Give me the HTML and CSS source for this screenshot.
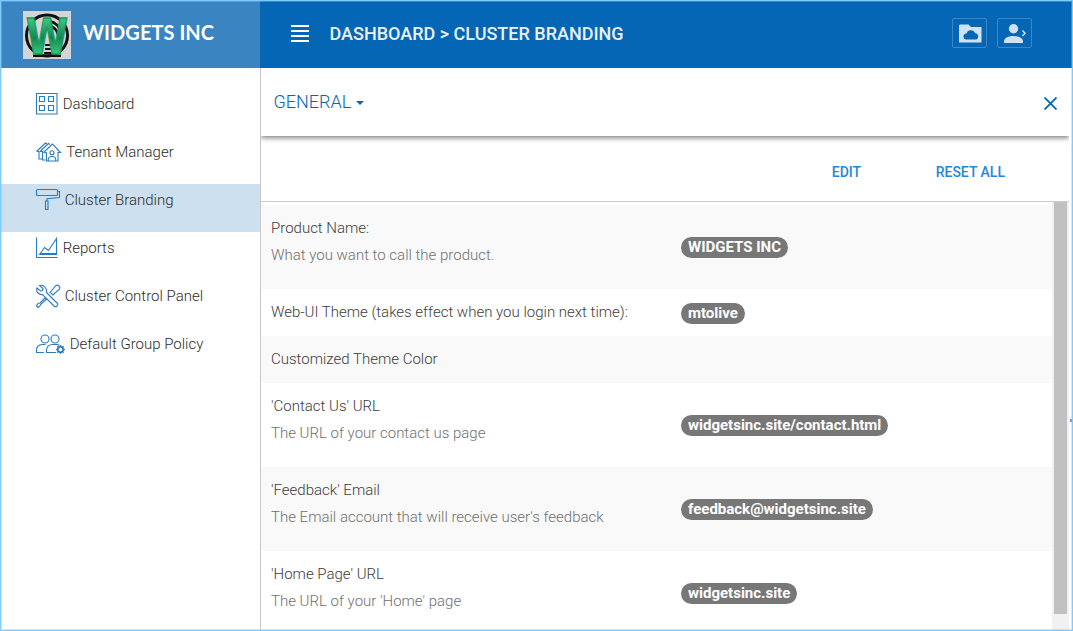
FILE: index.html
```html
<!DOCTYPE html>
<html lang="en">
<head>
<meta charset="utf-8">
<title>Cluster Branding</title>
<link rel="stylesheet" href="styles.css">
</head>
<body>
<div class="app">
  <header class="topbar">
    <div class="brand">
      <svg class="logo" width="48" height="48" viewBox="0 0 48 48">
        <defs>
          <linearGradient id="green" x1="0" y1="0" x2="0" y2="1">
            <stop offset=".2" stop-color="#35c47c"/><stop offset=".5" stop-color="#168550"/><stop offset=".8" stop-color="#35cc80"/>
          </linearGradient>
        </defs>
        <rect width="48" height="48" fill="#d3d3d8"/>
        <g fill="none" stroke="#101010">
          <circle cx="24" cy="24.500" r="20.500" stroke-width="3"/>
          <path d="M26 10q10 2 12 12M27 15q7 2 8 9" stroke-width="2.500"/>
          <path d="M22 34h6M22 38h6M21 42h8" stroke-width="2"/>
          <path d="M10 44.800h28" stroke-width="2.500"/>
        </g>
        <text class="logo-letter" x="24" y="43" text-anchor="middle" textLength="42" lengthAdjust="spacingAndGlyphs">W</text>
      </svg>
      <span class="brand-name">WIDGETS INC</span>
    </div>
    <div class="topbar-main">
      <svg class="burger" width="18" height="17" viewBox="0 0 18 17"><path d="M0 1h18M0 6h18M0 11h18M0 16h18" stroke="#fff" stroke-width="2"/></svg>
      <h1 class="crumbs">DASHBOARD &gt; CLUSTER BRANDING</h1>
      <div class="actions">
        <span class="action">
          <svg width="33" height="28" viewBox="0 0 33 28"><path fill="#d0e2f1" d="M7 5.500h8.500l2.500 2.500h10.500v15.500H6V7q0-1.500 1-1.500z"/><path fill="#0466b4" d="M13.500 20.500a3 3 0 0 1 0-6 4.600 4.600 0 0 1 8.700-.3 3.200 3.200 0 0 1 .5 6.300z"/></svg>
        </span>
        <span class="action">
          <svg width="33" height="28" viewBox="0 0 33 28"><g fill="#d0e2f1"><circle cx="15.500" cy="9.700" r="4.700"/><path d="M6 24v-1.500c0-4 5-5.500 9.500-5.500s9.500 1.500 9.500 5.500V24z"/></g><path d="M24.500 11.500l2.500 2.700-2.500 2.800" fill="none" stroke="#d0e2f1" stroke-width="1.500"/></svg>
        </span>
      </div>
    </div>
  </header>
  <div class="body">
    <nav class="sidebar">
      <a class="nav-item">
        <svg width="22" height="22" viewBox="0 0 22 22"><path d="M.5.500h20.500v20.500H.5zM3.500 3.500h5v5h-5zM12.500 3.500h5v5h-5zM3.500 12.500h5v5h-5zM12.500 12.500h5v5h-5z"/></svg>
        <span class="nav-label">Dashboard</span>
      </a>
      <a class="nav-item">
        <svg width="25" height="20" viewBox="0 0 25 20"><path d="M7.500 10.500L16.500 2l8 8.500h-2.500V19H10.500V10.500M7.500 10.500h3M.5 9.500L9.500 1l1.500 1M.5 9.500h2.500v7.500h3M4 9.500L12.500 1.500l1.500 1M4 9.500h2.500V18h3"/><circle cx="16" cy="10.700" r="2"/><path d="M12.300 19v-1.500q0-3 3.700-3t3.700 3V19"/></svg>
        <span class="nav-label tenant">Tenant Manager</span>
      </a>
      <a class="nav-item selected">
        <svg width="24" height="22" viewBox="0 0 24 22"><path d="M1.500.500h19q1 0 1 1v4q0 1-1 1h-19q-1 0-1-1v-4q0-1 1-1zM21.500 2.500h2v6l-12.500 1.200V12M9.500 12h2.500v8.500H9.500z"/></svg>
        <span class="nav-label">Cluster Branding</span>
      </a>
      <a class="nav-item">
        <svg width="22" height="22" viewBox="0 0 22 22"><path d="M.5.500v20h21M3.500 17.500l5-7 4 3L20.500 1.500v16zM4 16.500h16"/></svg>
        <span class="nav-label">Reports</span>
      </a>
      <a class="nav-item">
        <svg width="24" height="24" viewBox="0 0 24 24"><path d="M3.500 1.500l3.500 3-.5 2-2 .5-3.500-3q-1 3 1 5t4.500 1.500L18 22q1.500 1.500 3 0t.5-2.500L10.500 8.500Q11 5.500 9 3T3.500 1.500zM14 8.500l6-7q1.500-1 3 .5t.5 3l-6.500 6zM9 14l-5 5-2 .5-1.500 2.500L2 23.500l2-1.500.5-1.500L10.500 15z"/></svg>
        <span class="nav-label">Cluster Control Panel</span>
      </a>
      <a class="nav-item">
        <svg width="29" height="20" viewBox="0 0 29 20"><circle cx="9" cy="5" r="4"/><circle cx="19" cy="5" r="4"/><path d="M8 18.500H.5V16q0-5 6-5.500h3M20 18.500H10.500V16q.5-5.500 6-5.500h4q2 0 3 1"/><circle class="cog" cx="24.500" cy="15.500" r="2.700"/><path class="cog" d="M24.500 12v-.8M24.500 19v.8M21 15.500h-.8M28 15.500h.8M22 13l-.6-.6M27 13l.6-.6M22 18l-.6.600M27 18l.6.600"/></svg>
        <span class="nav-label">Default Group Policy</span>
      </a>
    </nav>
    <main class="content">
      <div class="section-bar">
        <span class="section-name">GENERAL</span>
        <span class="caret"></span>
        <svg class="close" width="13" height="13" viewBox="0 0 13 13"><path d="M.5.500l12 12M12.500.500l-12 12" stroke="#0466b4" stroke-width="1.800"/></svg>
      </div>
      <div class="toolbar">
        <span class="button">EDIT</span>
        <span class="button">RESET ALL</span>
      </div>
      <div class="scroll-area">
        <div class="rows">
          <div class="row shaded tall"><div class="desc"><p class="name">Product Name:</p><p class="hint">What you want to call the product.</p></div><span class="badge">WIDGETS INC</span></div>
          <div class="row"><div class="desc"><p class="name">Web-UI Theme (takes effect when you login next time):</p></div><span class="badge low">mtolive</span></div>
          <div class="row shaded"><div class="desc"><p class="name">Customized Theme Color</p></div></div>
          <div class="row tall"><div class="desc"><p class="name">'Contact Us' URL</p><p class="hint">The URL of your contact us page</p></div><span class="badge">widgetsinc.site/contact.html</span></div>
          <div class="row shaded tall"><div class="desc"><p class="name">'Feedback' Email</p><p class="hint">The Email account that will receive user's feedback</p></div><span class="badge">feedback@widgetsinc.site</span></div>
          <div class="row tall"><div class="desc"><p class="name">'Home Page' URL</p><p class="hint">The URL of your 'Home' page</p></div><span class="badge">widgetsinc.site</span></div>
        </div>
        <div class="scrollbar"><div class="thumb"></div></div>
      </div>
    </main>
  </div>
  <span class="speck"></span>
</div>
</body>
</html>
```
FILE: styles.css
```css
* { box-sizing: border-box; }
body { margin: 0; font-family: Roboto, "Liberation Sans", sans-serif; font-weight: 300; color: #333; background: #fff; }
.app { position: relative; display: flex; flex-direction: column; width: 1073px; height: 631px; overflow: hidden; }
.app::after { content: ""; position: absolute; inset: 0; border: 1px solid #7fcbff; box-shadow: inset 0 0 0 1px rgba(127, 203, 255, .4); }
.topbar { display: flex; flex: none; height: 68px; background: #0466b4; }
.brand { display: flex; align-items: flex-start; width: 260px; padding: 11px 0 0 23px; background: #3984c1; }
.logo { flex: none; overflow: visible; }
.logo-letter { font: 700 49px "DejaVu Sans", sans-serif; fill: url(#green); stroke: #1e9a60; stroke-width: 1.5; }
.brand-name { margin: 7px 0 0 12px; font: 700 20px/28px Lato, sans-serif; letter-spacing: .05px; color: #fff; white-space: nowrap; }
.topbar-main { display: flex; flex: 1; align-items: flex-start; padding: 0 41px 0 31px; }
.burger { margin-top: 25px; }
.crumbs { margin: 22px 0 0 20.500px; font-size: 18px; line-height: 24px; font-weight: 500; color: #eaf1f7; white-space: nowrap; }
.actions { display: flex; gap: 10px; margin: 18px 0 0 auto; }
.action { display: flex; width: 35px; height: 30px; border: 1px solid #3b86c4; border-radius: 2px; }
.body { display: flex; flex: 1; min-height: 0; }
.sidebar { width: 261px; flex: none; padding-top: 20px; border-right: 1px solid #c8c8c8; }
.nav-item { display: flex; align-items: center; height: 48px; padding: 0 0 16px 36px; }
.nav-item svg { flex: none; fill: none; stroke: #2a7cc0; stroke-width: 1.1; overflow: visible; }
.nav-label { margin-left: 4.700px; font-size: 15px; line-height: 20px; white-space: nowrap; color: #2c2c2c; }
.nav-label.tenant { margin-left: 5.300px; }
.selected { background: #cde0ef; }
.nav-item .cog { stroke: #1a6fb8; stroke-width: 1.5; }
.content { display: flex; flex: 1; flex-direction: column; padding-right: 4px; min-width: 0; }
.section-bar { display: flex; flex: none; align-items: center; height: 68px; padding: 0 12px 0 12.500px; box-shadow: 0 2px 5px rgba(0, 0, 0, .5); clip-path: inset(0 0 -10px 0); color: #0466b4; }
.section-name { font-size: 18px; line-height: 24px; }
.caret { margin: 2px 0 0 4.500px; border: 4px solid transparent; border-top-color: #0466b4; border-bottom: 0; }
.close { margin: 3px 0 0 auto; }
.toolbar { display: flex; flex: none; justify-content: flex-end; align-items: center; gap: 74.500px; height: 66px; padding: 6px 64px 0 0; border-bottom: 1px solid #ccc; }
.button { font-size: 14px; line-height: 20px; font-weight: 500; color: #1f88d9; }
.scroll-area { display: flex; flex: 1; min-height: 0; overflow: hidden; }
.rows { flex: 1; padding-top: 3px; }
.row { display: flex; align-items: center; height: 47px; padding-left: 10px; }
.tall { height: 84px; }
.tall .desc { align-self: flex-start; padding-top: 10px; }
.shaded { background: #f9f9f9; }
.desc { width: 410px; flex: none; }
.name, .hint { margin: 0; font-size: 15px; line-height: 27px; white-space: nowrap; color: #3c3c3c; }
.hint { color: #707070; }
.badge { height: 21px; padding: 0 7px; border-radius: 11px; background: #777; color: #fff; font-size: 15px; line-height: 20px; font-weight: 700; white-space: nowrap; }
.badge.low { margin-top: 2px; }
.scrollbar { width: 17px; flex: none; padding: 0 2px; background: #f1f1f1; }
.thumb { height: 412px; background: #c1c1c1; }
.speck { position: absolute; left: 1070px; top: 419px; width: 2px; height: 3px; background: #6d8fca; }
```
